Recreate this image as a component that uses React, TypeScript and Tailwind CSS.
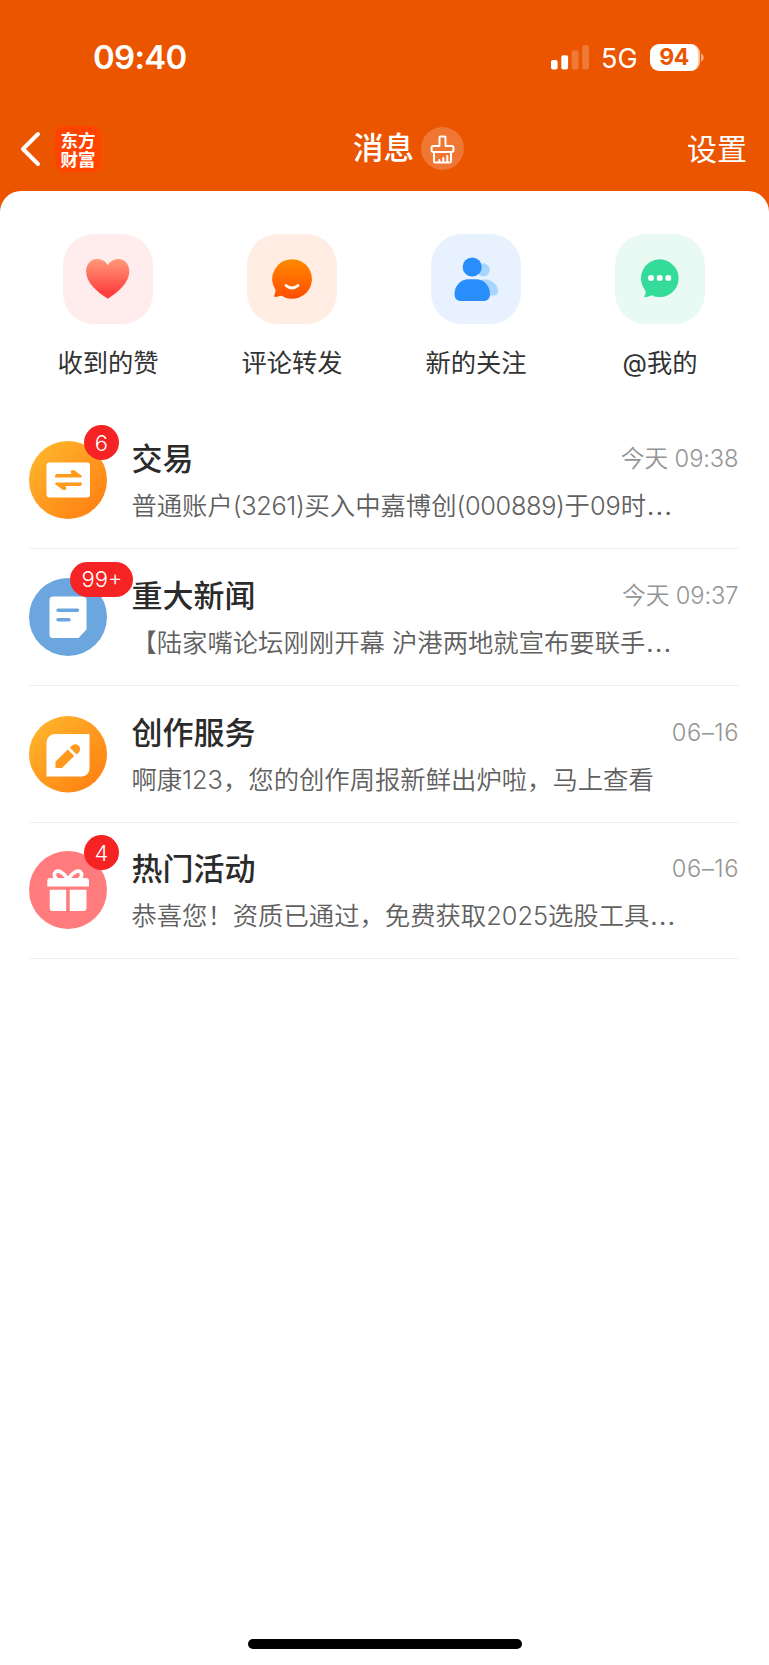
import type { ReactNode } from "react";

function StatusBar() {
  return (
    <div className="flex h-[115px] items-center justify-between pl-[93px] pr-[65px]">
      <span className="text-[33px] font-semibold leading-none tracking-[-0.7px]">09:40</span>
      <div className="flex items-center">
        <svg width="38" height="25" viewBox="0 0 38 25" fill="#fff">
          <rect x="0" y="15" width="6.6" height="9.5" rx="2" />
          <rect x="10.3" y="10.3" width="6.8" height="14.2" rx="2" />
          <rect x="20.7" y="5.3" width="6.8" height="19.2" rx="2" fillOpacity=".22" />
          <rect x="31.2" y="0.3" width="6.8" height="24.2" rx="2" fillOpacity=".22" />
        </svg>
        <span className="ml-[12px] mt-[2px] w-[49px] text-[27px] font-normal leading-none">5G</span>
        <div className="flex h-[27px] w-[50px] items-center justify-center rounded-[9px] border-r-2 border-[#f9c9ab] bg-white text-[23px] font-bold leading-none tracking-[-0.5px] text-[#eb5500]">
          94
        </div>
        <svg className="ml-px" width="3" height="9" viewBox="0 0 3 9">
          <path d="M0 0.5C3.6 1.6 3.6 7.4 0 8.500Z" fill="#fff" fillOpacity=".5" />
        </svg>
      </div>
    </div>
  );
}

function NavBar() {
  return (
    <div className="grid h-[76px] grid-cols-[1fr_auto_1fr] items-center pb-[9px] pl-[20px] pr-[22px]">
      <div className="flex items-center">
        <svg width="22" height="36" viewBox="0 0 22 36" fill="none" stroke="#fff" strokeWidth="4" strokeLinecap="round" strokeLinejoin="round">
          <path d="M18 3L3 18l15 15" />
        </svg>
        <div className="ml-[13px] flex size-[46px] items-center justify-center rounded-[9px] bg-[#ff4400]">
          <p className="w-[36px] text-center font-['Noto_Sans_CJK_SC',sans-serif] text-[17.500px] font-bold leading-[19px]">东方财富</p>
        </div>
      </div>
      <div className="ml-[50px] flex items-center">
        <span className="text-[30.500px] font-medium leading-none">消息</span>
        <div className="ml-[7px] flex size-[43px] items-center justify-center rounded-full bg-white/20">
          <svg width="25" height="30" viewBox="0 0 25 30" fill="none" stroke="#fff" strokeWidth="2" strokeLinejoin="round" strokeLinecap="round">
            <path d="M9.500 12V3.500a1 1 0 0 1 1-1h4a1 1 0 0 1 1 1V12h6.200a1.700 1.700 0 0 1 1.700 1.700v2.600a1.700 1.700 0 0 1-1.700 1.700H3.300a1.700 1.700 0 0 1-1.700-1.700v-2.600A1.700 1.700 0 0 1 3.300 12z" />
            <path d="M4 18.500v8.500a1.500 1.500 0 0 0 1.500 1.500h14A1.500 1.500 0 0 0 21 27v-8.500M9.300 28v-2M13.300 28v-4M17.300 28v-6" />
          </svg>
        </div>
      </div>
      <span className="justify-self-end text-[30px] leading-none">设置</span>
    </div>
  );
}

function HeartIcon() {
  return (
    <svg width="90" height="90" viewBox="0 0 90 90">
      <defs>
        <linearGradient id="heart" x1="0" y1="0" x2="0" y2="1">
          <stop offset="0" stopColor="#ff9a78" />
          <stop offset=".85" stopColor="#ff4040" />
        </linearGradient>
      </defs>
      <path d="M44.800 64.700C34 58 23.100 48.500 23.100 37.500 23.100 29.500 28.500 25 34 25c4.800 0 8.800 2.300 10.800 6.300C46.800 27.300 50.800 25 55.500 25c5.500 0 10.800 4.500 10.800 12.500C66.300 48.500 55.500 58 44.800 64.700z" fill="url(#heart)" />
    </svg>
  );
}

function CommentIcon() {
  return (
    <svg width="90" height="90" viewBox="0 0 90 90">
      <defs>
        <linearGradient id="comment" x1="0" y1="0" x2="0" y2="1">
          <stop offset="0" stopColor="#ff8a00" />
          <stop offset="1" stopColor="#ff4d00" />
        </linearGradient>
      </defs>
      <path d="M45 25.200a19.800 19.800 0 1 1-10.500 36.500C32 61.800 30.500 63 28 63c-.8 0-1-.7-.8-1.400.8-2 1.600-4.500 1.200-6A19.800 19.800 0 0 1 45 25.200z" fill="url(#comment)" />
      <path d="M39 51.500q6 5 12 0" fill="none" stroke="#fff" strokeWidth="2.800" strokeLinecap="round" />
    </svg>
  );
}

function FollowIcon() {
  return (
    <svg width="90" height="90" viewBox="0 0 90 90">
      <g fill="#a6d5ff">
        <circle cx="52.300" cy="35.800" r="6.500" />
        <path d="M50 45.500h4c8 0 13 6 13 12 0 2.500-1.500 4-4 4H50z" />
      </g>
      <g fill="#298dfb">
        <circle cx="41.200" cy="33" r="9.600" />
        <path d="M38 45.300h6.500c9.500 0 14.500 7.500 14.500 14.700 0 4.500-2.500 7-6.500 7h-22.500c-4 0-6.500-2.500-6.500-7 0-7.200 5-14.700 14.500-14.700z" />
      </g>
    </svg>
  );
}

function MentionIcon() {
  return (
    <svg width="90" height="90" viewBox="0 0 90 90">
      <path d="M44.700 25.300a18.900 18.900 0 1 1-8.200 35.900c-2 .8-4 1.900-6.600 1.900-.9 0-1-.8-.4-1.400 1.500-1.500 1.700-4.200.3-6A18.900 18.900 0 0 1 44.700 25.300z" fill="#35dc99" />
      <g fill="#fff">
        <circle cx="36" cy="44" r="3" />
        <circle cx="44.700" cy="44" r="3" />
        <circle cx="53.300" cy="44" r="3" />
      </g>
    </svg>
  );
}

function Shortcut({ label, tint, children }: { label: string; tint: string; children: ReactNode }) {
  return (
    <div className="flex w-[184px] flex-col items-center">
      <div className={`size-[90px] rounded-[31px] ${tint}`}>{children}</div>
      <span className="mt-[25px] text-[25.300px] leading-[28px] text-[#333]">{label}</span>
    </div>
  );
}

function TradeIcon() {
  return (
    <svg width="78" height="78" viewBox="0 0 78 78">
      <defs>
        <linearGradient id="trade" x1="0" y1="0" x2="1" y2="1">
          <stop offset=".1" stopColor="#ffb42b" />
          <stop offset=".9" stopColor="#ff8113" />
        </linearGradient>
      </defs>
      <circle cx="39" cy="39" r="39" fill="url(#trade)" />
      <rect x="17.500" y="21.500" width="43.500" height="35" rx="3" fill="#fff" />
      <g fill="#ff9a1f">
        <path d="M28 33h14.500l-.8-2.200c-.3-1.500 2-2.700 4-1.300l6.600 5c1 .9.700 2-.7 2H26c0-2 .7-3.500 2-3.500z" />
        <path d="M51 45H36.500l.8 2.200c.3 1.500-2 2.700-4 1.300l-6.600-5c-1-.9-.7-2 .7-2H53c0 2-.7 3.500-2 3.500z" />
      </g>
    </svg>
  );
}

function NewsIcon() {
  return (
    <svg width="78" height="78" viewBox="0 0 78 78">
      <circle cx="39" cy="39" r="39" fill="#6ba7de" />
      <path d="M24 18.500h30a3.500 3.500 0 0 1 3.500 3.500v29.500L49.500 60H24a3.500 3.500 0 0 1-3.500-3.500V22a3.500 3.500 0 0 1 3.500-3.500z" fill="#fff" />
      <path d="M29 32.300h19.500M29 41.700h11" stroke="#6ba7de" strokeWidth="3.400" strokeLinecap="round" />
    </svg>
  );
}

function CreateIcon() {
  return (
    <svg width="78" height="78" viewBox="0 0 78 78">
      <ellipse cx="39" cy="39.200" rx="39" ry="38.200" fill="url(#trade)" />
      <path d="M26 19h34.500v34.500a8 8 0 0 1-8 8h-35v-34a8.500 8.500 0 0 1 8.500-8.500z" fill="#fff" />
      <g fill="#ff9a1f">
        <path d="M26.500 53v-6.600L38.800 34.500l6.400 6.500-12.200 12z" />
        <path d="M40.800 32.500l2.300-2.100c5-3.300 10.300 2 6.900 6.800L47.500 39.500z" />
      </g>
    </svg>
  );
}

function GiftIcon() {
  return (
    <svg width="78" height="78" viewBox="0 0 78 78">
      <circle cx="39" cy="39" r="39" fill="#ff7b7e" />
      <g fill="none" stroke="#fff" strokeWidth="3.600" strokeLinejoin="round">
        <path d="M39 28C34.500 21.500 29 18.500 26.500 21c-2 2.200-1 5 1 7" />
        <path d="M39 28C43.500 21.500 49 18.500 51.500 21c2 2.200 1 5-1 7" />
      </g>
      <path d="M21.500 27H57a3 3 0 0 1 3 3v5.500H18.300V30a3 3 0 0 1 3.200-3z" fill="#fff" />
      <path d="M20.700 38.800h16.500V60H23.700a3 3 0 0 1-3-3zM40.700 38.800h16.800V57a3 3 0 0 1-3 3H40.700z" fill="#fff" />
    </svg>
  );
}

type Message = {
  title: string;
  time: string;
  text: string;
  badge?: string;
  icon: ReactNode;
};

const messages: Message[] = [
  { title: "交易", time: "今天 09:38", text: "普通账户(3261)买入中嘉博创(000889)于09时…", badge: "6", icon: <TradeIcon /> },
  { title: "重大新闻", time: "今天 09:37", text: "【陆家嘴论坛刚刚开幕 沪港两地就宣布要联手…", badge: "99+", icon: <NewsIcon /> },
  { title: "创作服务", time: "06–16", text: "啊康123，您的创作周报新鲜出炉啦，马上查看", icon: <CreateIcon /> },
  { title: "热门活动", time: "06–16", text: "恭喜您！资质已通过，免费获取2025选股工具…", badge: "4", icon: <GiftIcon /> },
];

/* Account and stock codes are set slightly tighter, the ellipsis slightly wider. */
function Preview({ text }: { text: string }) {
  return (
    <>
      {text.split(/(\([^)]*\)|…)/).map((part, i) => {
        if (part === "…") return <span key={i} className="text-[31px] leading-none">{part}</span>;
        if (part.startsWith("(")) return <span key={i} className="tracking-[-0.35px]">{part}</span>;
        return part;
      })}
    </>
  );
}

function MessageRow({ title, time, text, badge, icon }: Message) {
  return (
    <div className="flex h-[136.800px] items-center border-b border-[#ededed]">
      <div className="relative size-[78px] shrink-0">
        {icon}
        {badge && (
          <span
            className={`absolute -top-[16px] flex h-[35px] items-center justify-center rounded-full bg-[#f52323] text-[22px] font-light leading-none text-white ${
              badge.length > 1 ? "left-[41px] w-[63px]" : "left-[54.500px] w-[35px]"
            }`}
          >
            {badge}
          </span>
        )}
      </div>
      <div className="ml-[24px] min-w-0 flex-1">
        <div className="mt-px flex items-center justify-between">
          <span className="text-[31px] font-medium leading-[44px] text-[#2b2b2b]">{title}</span>
          <span
            className={`text-[23.700px] font-[350] leading-[44px] text-[#949494] ${
              time.includes("–") ? "-mr-[0.6px] tracking-[0.6px]" : "tracking-[-0.1px]"
            }`}
          >
            {time}
          </span>
        </div>
        <div className="mt-[7px] h-[36px] whitespace-nowrap text-[25.350px] font-[350] leading-[36px] text-[#606060]">
          <Preview text={text} />
        </div>
      </div>
    </div>
  );
}

export default function App() {
  return (
    <div className="flex h-[1665px] w-[769px] flex-col bg-[#eb5500] font-['Inter','Noto_Sans_CJK_SC',sans-serif] text-white">
      <StatusBar />
      <NavBar />
      <main className="flex flex-1 flex-col rounded-t-[21px] bg-white">
        <div className="flex pl-[16px] pt-[43px]">
          <Shortcut label="收到的赞" tint="bg-[#ffeded]"><HeartIcon /></Shortcut>
          <Shortcut label="评论转发" tint="bg-[#ffede4]"><CommentIcon /></Shortcut>
          <Shortcut label="新的关注" tint="bg-[#e8f2ff]"><FollowIcon /></Shortcut>
          <Shortcut label="@我的" tint="bg-[#e8faf3]"><MentionIcon /></Shortcut>
        </div>
        <div className="mt-[35.200px] pl-[29.400px] pr-[30.500px]">
          {messages.map((m) => (
            <MessageRow key={m.title} {...m} />
          ))}
        </div>
        <div className="mb-[16px] ml-[247.500px] mt-auto h-[10px] w-[274px] rounded-full bg-black" />
      </main>
    </div>
  );
}
